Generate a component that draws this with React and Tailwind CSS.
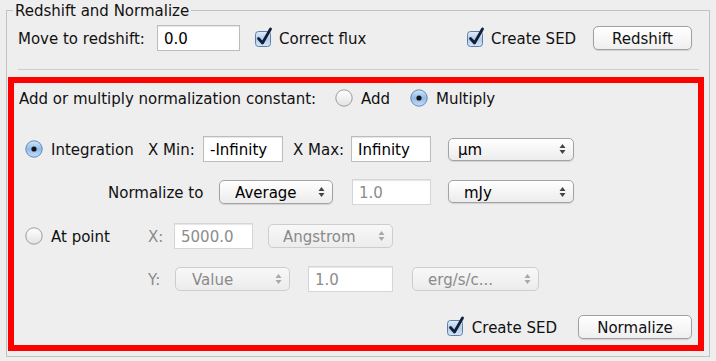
import React from "react";

// Aqua-style form widgets, drawn with Tailwind classes

function Check() {
  return (
    <svg width="18" height="20" viewBox="0 0 18 20" className="shrink-0 -mt-[2px]">
      <defs>
        <linearGradient id="cb" x1="0" y1="0" x2="0" y2="1">
          <stop offset="0" stopColor="#e4eefa" />
          <stop offset="0.5" stopColor="#b2cdeb" />
          <stop offset="1" stopColor="#d6e6f7" />
        </linearGradient>
      </defs>
      <rect x="0.5" y="4.5" width="15" height="15" rx="3" fill="url(#cb)" stroke="#5d7fa8" />
      <path d="M3.5 11.5 L7.5 16 L15.5 2" fill="none" stroke="#10203a" strokeWidth="2.8" strokeLinecap="round" strokeLinejoin="round" />
    </svg>
  );
}

function Radio({ on }) {
  return (
    <svg width="18" height="18" viewBox="0 0 18 18" className="shrink-0">
      <defs>
        <linearGradient id="ron" x1="0" y1="0" x2="0" y2="1">
          <stop offset="0" stopColor="#d4e6f9" />
          <stop offset="0.5" stopColor="#8fbbea" />
          <stop offset="1" stopColor="#c6def6" />
        </linearGradient>
        <linearGradient id="roff" x1="0" y1="0" x2="0" y2="1">
          <stop offset="0" stopColor="#ffffff" />
          <stop offset="1" stopColor="#e2e2e2" />
        </linearGradient>
      </defs>
      <circle cx="9" cy="9" r="8.2" fill={on ? "url(#ron)" : "url(#roff)"} stroke={on ? "#6289b8" : "#9d9d9d"} />
      {on && <circle cx="9" cy="9" r="2.6" fill="#141414" />}
    </svg>
  );
}

function Arrows({ dim }) {
  const c = dim ? "#a8a8a8" : "#444";
  return (
    <svg width="7" height="12" viewBox="0 0 7 12" className="shrink-0">
      <path d="M3.5 1 L6.5 5 L0.5 5 Z" fill={c} />
      <path d="M3.5 11 L6.5 7 L0.5 7 Z" fill={c} />
    </svg>
  );
}

// text nudged down a little so the glyphs sit like Lucida Grande
function Text({ className = "", children }) {
  return <span className={`pt-[3px] ${className}`}>{children}</span>;
}

function Field({ value, w, disabled }) {
  return (
    <div
      className={`${w} h-[26px] flex items-center px-[6px] bg-white border ${
        disabled ? "border-[#d6d6d6] text-[#8c8c8c]" : "border-[#bcbcbc] text-black"
      } shadow-[inset_0_1px_1px_rgba(0,0,0,0.1)]`}
    >
      <Text>{value}</Text>
    </div>
  );
}

function Combo({ value, w, pl = "pl-[15px]", h = "h-[23px]", disabled }) {
  return (
    <div
      className={`${w} ${h} ${pl} pr-[7px] flex items-center justify-between rounded-[5px] border ${
        disabled
          ? "border-[#cdcdcd] text-[#8a8a8a] bg-gradient-to-b from-[#f8f8f8] to-[#ececec]"
          : "border-[#a3a3a3] text-black bg-gradient-to-b from-white to-[#ececec] shadow-[0_1px_1px_rgba(0,0,0,0.12)]"
      }`}
    >
      <Text>{value}</Text>
      <Arrows dim={disabled} />
    </div>
  );
}

function Button({ children, w, h }) {
  return (
    <div
      className={`${w} ${h} flex items-center justify-center rounded-[5px] border border-[#a0a0a0] bg-gradient-to-b from-white to-[#efefef] shadow-[0_1px_1px_rgba(0,0,0,0.12)]`}
    >
      <Text>{children}</Text>
    </div>
  );
}

export default function App() {
  return (
    <div className="w-[716px] h-[361px] bg-[#eeeeee] pt-[10px] pl-[6px] overflow-hidden font-['DejaVu_Sans',sans-serif] text-[15px] text-[#111]">
      <div className="relative w-[704px] h-[347px] border border-[#c2c2c2]">
        {/* Title */}
        <span className="absolute left-[6px] -top-[9px] px-[2px] bg-[#eeeeee] leading-[18px]">
          Redshift and Normalize
        </span>

        {/* Redshift row */}
        <div className="mt-[14px] h-[26px] pl-[11px] flex items-center">
          <Text className="w-[139px]">Move to redshift:</Text>
          <Field value="0.0" w="w-[83px]" />
          <div className="w-[227px] pl-[15px] flex items-center">
            <Check />
            <Text className="ml-[6px]">Correct flux</Text>
          </div>
          <div className="w-[126px] flex items-center">
            <Check />
            <Text className="ml-[6px]">Create SED</Text>
          </div>
          <Button w="w-[99px]" h="h-[24px]">Redshift</Button>
        </div>

        <div className="mt-[18px] ml-[11px] w-[681px] h-px bg-[#cdcdcd]" />

        {/* Normalize panel */}
        <div className="mt-[7px] ml-[1px] w-[696px] h-[274px] border-[6px] border-[#ff0000]">
          <div className="mt-[2px] h-[26px] pl-[5px] flex items-center">
            <Text className="w-[316px]">Add or multiply normalization constant:</Text>
            <div className="w-[75px] flex items-center">
              <Radio />
              <Text className="ml-[8px]">Add</Text>
            </div>
            <Radio on />
            <Text className="ml-[8px]">Multiply</Text>
          </div>

          <div className="mt-[25px] h-[26px] pl-[11px] flex items-center">
            <div className="w-[123px] flex items-center">
              <Radio on />
              <Text className="ml-[8px]">Integration</Text>
            </div>
            <Text className="w-[55px]">X Min:</Text>
            <Field value="-Infinity" w="w-[80px]" />
            <Text className="ml-[10px] w-[58px]">X Max:</Text>
            <Field value="Infinity" w="w-[80px]" />
            <div className="ml-[17px]">
              <Combo value="µm" w="w-[126px]" pl="pl-[9px]" />
            </div>
          </div>

          <div className="mt-[17px] h-[25px] pl-[94px] flex items-center">
            <Text className="w-[111px]">Normalize to</Text>
            <Combo value="Average" w="w-[114px]" h="h-[24px]" />
            <div className="ml-[19px]">
              <Field value="1.0" w="w-[79px]" disabled />
            </div>
            <div className="ml-[17px]">
              <Combo value="mJy" w="w-[126px]" />
            </div>
          </div>

          <div className="mt-[19px] h-[26px] pl-[11px] flex items-center">
            <div className="w-[123px] flex items-center">
              <Radio />
              <Text className="ml-[8px]">At point</Text>
            </div>
            <Text className="w-[26px] text-[#8a8a8a]">X:</Text>
            <Field value="5000.0" w="w-[79px]" disabled />
            <div className="ml-[15px]">
              <Combo value="Angstrom" w="w-[125px]" h="h-[24px]" pl="pl-[14px]" disabled />
            </div>
          </div>

          <div className="mt-[17px] h-[26px] pl-[134px] flex items-center">
            <Text className="w-[27px] text-[#8a8a8a]">Y:</Text>
            <Combo value="Value" w="w-[115px]" h="h-[24px]" pl="pl-[16px]" disabled />
            <div className="ml-[18px]">
              <Field value="1.0" w="w-[85px]" disabled />
            </div>
            <div className="ml-[19px]">
              <Combo value="erg/s/c..." w="w-[127px]" h="h-[24px]" disabled />
            </div>
          </div>

          <div className="mt-[23px] h-[24px] pr-[6px] flex items-center justify-end">
            <Check />
            <Text className="ml-[7px]">Create SED</Text>
            <div className="ml-[21px]">
              <Button w="w-[114px]" h="h-[24px]">Normalize</Button>
            </div>
          </div>
        </div>
      </div>
    </div>
  );
}
